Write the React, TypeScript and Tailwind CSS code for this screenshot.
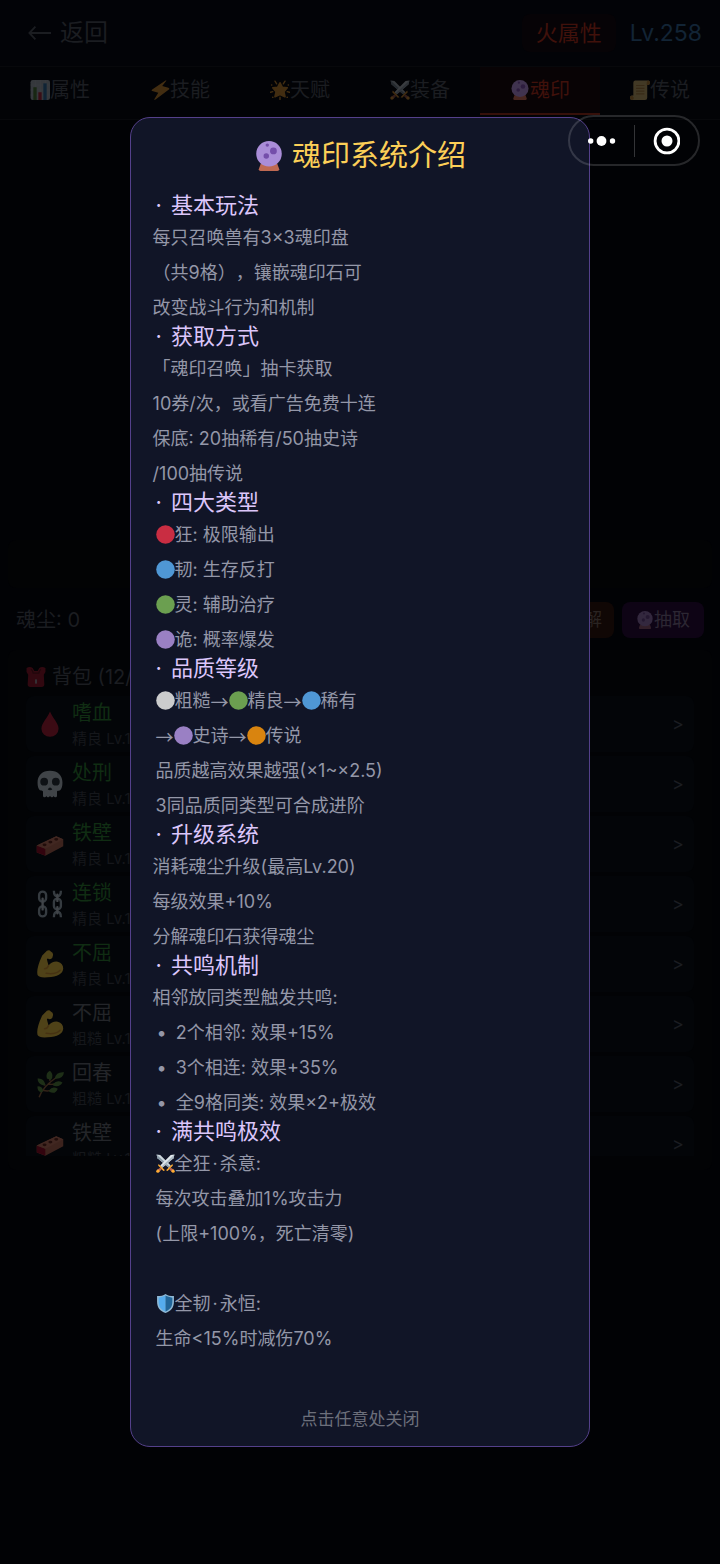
import type { ReactNode } from 'react';

type IconProps = { className?: string };

const CrystalBall = ({ className = 'size-[18px]' }: IconProps) => (
  <svg viewBox="-6 0 88 88" className={className} aria-hidden="true">
    <path d="M14 66h48l6 17q0 5-5 5H13q-5 0-5-5z" fill="#bf6952" />
    <circle cx="38" cy="37.500" r="37.500" fill="#aa8dd8" />
    <circle cx="51" cy="29" r="10" fill="#744eaa" />
    <circle cx="30" cy="44" r="8" fill="#744eaa" />
    <circle cx="33" cy="12" r="5" fill="#744eaa" />
  </svg>
);

const Swords = ({ className = 'size-[18px]' }: IconProps) => (
  <svg viewBox="0 0 36 36" className={className} aria-hidden="true">
    <path d="M1 1l7 1 20 20-4 4L3 8z" fill="#ccd6dd" />
    <path d="M1 1l25 23-2 2L3 8z" fill="#8899a6" />
    <path d="M35 1l-7 1L8 22l4 4L33 8z" fill="#e1e8ed" />
    <path d="M35 1L10 24l2 2L33 8z" fill="#aab8c2" />
    <path d="M5 19l12 12-3 1-10-10zM31 19L19 31l3 1 10-10z" fill="#ffac33" />
    <path d="M8 26l3 3-5 5-4-4zM28 26l-3 3 5 5 4-4z" fill="#bf6952" />
    <circle cx="3.500" cy="32.500" r="3" fill="#ffac33" />
    <circle cx="32.500" cy="32.500" r="3" fill="#ffac33" />
  </svg>
);

const Shield = ({ className = 'size-[18px]' }: IconProps) => (
  <svg viewBox="0 0 36 36" className={className} aria-hidden="true">
    <path d="M18 0c4 3 9 4 16 4v10c0 12-6 18-16 22C8 32 2 26 2 14V4c7 0 12-1 16-4z" fill="#8fb8d4" />
    <path d="M18 3c-4 2-8 3.500-13 4v7c0 10 4 15 13 19z" fill="#55acee" />
    <path d="M18 3c4 2 8 3.500 13 4v7c0 10-4 15-13 19z" fill="#226699" />
  </svg>
);

const Chart = ({ className = 'size-5' }: IconProps) => (
  <svg viewBox="0 0 36 36" className={className} aria-hidden="true">
    <rect x="1" y="0" width="35" height="36" rx="4" fill="#ccd6dd" />
    <path d="M1 9h35M1 18h35M1 27h35M10 0v36M19 0v36M28 0v36" stroke="#e1e8ed" />
    <rect x="6" y="13" width="6" height="23" fill="#5c913b" />
    <rect x="15" y="22" width="6" height="14" fill="#dd2e44" />
    <rect x="24" y="6" width="6" height="30" fill="#3b88c3" />
  </svg>
);

const Bolt = ({ className = 'size-5' }: IconProps) => (
  <svg viewBox="0 0 36 36" className={className} aria-hidden="true">
    <path d="M28 1L4 17q-2 2 0 3l11 3L8 34q-1 3 2 1l24-18q2-2-1-3l-11-3 7-9q1-2-1-1z" fill="#ffac33" />
  </svg>
);

const Star = ({ className = 'size-5' }: IconProps) => (
  <svg viewBox="0 0 36 36" className={className} aria-hidden="true">
    <path d="M18 5l4 8 9 1-6 7 2 9-9-4-9 4 2-9-6-7 9-1z" fill="#ffac33" stroke="#ffac33" strokeWidth="3" strokeLinejoin="round" />
    <path d="M9 2l3 5M27 2l-3 5M1 22l4-1M35 22l-4-1M18 31v4" stroke="#ffac33" strokeWidth="2.500" strokeLinecap="round" />
    <circle cx="3" cy="9" r="1.500" fill="#ffac33" />
    <circle cx="33" cy="9" r="1.500" fill="#ffac33" />
    <circle cx="5" cy="31" r="1.500" fill="#ffac33" />
    <circle cx="31" cy="31" r="1.500" fill="#ffac33" />
  </svg>
);

const Scroll = ({ className = 'size-5' }: IconProps) => (
  <svg viewBox="0 0 36 36" className={className} aria-hidden="true">
    <path d="M9 1h24q3 1 3 4t-3 4h-2v23q0 4-4 4H4q-4 0-4-4t4-4h2V5q0-3 3-4z" fill="#ffd983" />
    <path d="M30 9h3q3-1 3-4t-3-4q-3 1-3 4zM4 28q-4 0-4 4t4 4q3-1 3-4z" fill="#e39f3d" />
    <path d="M11 10h15M11 15h15M11 20h15M11 25h15" stroke="#d99e4a" strokeWidth="2" />
  </svg>
);

const Satchel = ({ className = 'size-5' }: IconProps) => (
  <svg viewBox="0 0 36 36" className={className} aria-hidden="true">
    <path d="M1 2q6-4 11 0l3 5h6l3-5q5-4 11 0v7l-3 5 1 17q0 5-5 5H8q-5 0-5-5l1-17-3-5z" fill="#be1931" />
    <path d="M9 4q3 2 4 7h10q1-5 4-7" fill="none" stroke="#77111f" strokeWidth="2.500" />
    <rect x="16.500" y="22" width="3" height="8" rx="1" fill="#ccd6dd" />
  </svg>
);

const Drop = ({ className = 'size-7' }: IconProps) => (
  <svg viewBox="0 0 36 36" className={className} aria-hidden="true">
    <path d="M18 2c3 8 11 15 11 22a11 10.500 0 0 1-22 0C7 17 15 10 18 2z" fill="#be1931" />
  </svg>
);

const Skull = ({ className = 'size-7' }: IconProps) => (
  <svg viewBox="0 0 36 36" className={className} aria-hidden="true">
    <path
      d="M18 1c10 0 16 6 16 15 0 5-1 8-3 10-1 1-4 0-4 2v5q0 2-2 2t-2-2q-1 2-2.500 2T18 33q-1 2-2.500 2T13 33q0 2-2 2t-2-2v-5c0-2-3-1-4-2-2-2-3-5-3-10C2 7 8 1 18 1z"
      fill="#ccd6dd"
    />
    <circle cx="10.500" cy="15" r="5" fill="#292f33" />
    <circle cx="25.500" cy="15" r="5" fill="#292f33" />
    <path d="M15 25q3-5 6 0-3 2-6 0z" fill="#292f33" />
  </svg>
);

const Brick = ({ className = 'size-7' }: IconProps) => (
  <svg viewBox="0 0 36 36" className={className} aria-hidden="true">
    <path d="M1 20L26 8l9 4v9L12 33 1 29z" fill="#c1694f" />
    <path d="M1 20l11 4v9L1 29z" fill="#a0041e" />
    <path d="M1 20L26 8l9 4-23 12z" fill="#d0765c" />
    <ellipse cx="11" cy="19" rx="2.600" ry="1.800" fill="#662113" />
    <ellipse cx="18.500" cy="15.500" rx="2.600" ry="1.800" fill="#662113" />
    <ellipse cx="26" cy="12" rx="2.600" ry="1.800" fill="#662113" />
  </svg>
);

const Chains = ({ className = 'size-7' }: IconProps) => (
  <svg viewBox="0 0 36 36" className={className} aria-hidden="true">
    <g fill="none" stroke="#aab8c2" strokeWidth="3">
      <rect x="4" y="2" width="9" height="13" rx="4.500" />
      <rect x="4" y="21" width="9" height="13" rx="4.500" />
      <rect x="23" y="11" width="9" height="14" rx="4.500" />
      <path d="M23 1q0 7 4.500 7T32 1M23 35q0-7 4.500-7T32 35" />
    </g>
    <path d="M8.500 11v14M27.500 6v8M27.500 22v8" stroke="#ccd6dd" strokeWidth="3" strokeLinecap="round" />
  </svg>
);

const Arm = ({ className = 'size-7' }: IconProps) => (
  <svg viewBox="0 0 36 36" className={className} aria-hidden="true">
    <path d="M14 1q3-2 5 1 3 1 3 4l-1 4q-2 3-6 1l-1 1 2 8q5-6 12-5 7 2 7 9-1 10-20 11-11 1-13-3Q0 24 8 7z" fill="#ffcf3d" />
    <path d="M16 20q-1 4-5 4M13 30q12 2 18-4" fill="none" stroke="#e09a2e" strokeWidth="2" strokeLinecap="round" />
  </svg>
);

const Herb = ({ className = 'size-7' }: IconProps) => (
  <svg viewBox="0 0 36 36" className={className} aria-hidden="true">
    <path d="M4 35q4-13 23-26M9 26q6 2 11 0M15 18q6 1 9 0M12 20l-4-4M18 14l-1-5" fill="none" stroke="#a0683c" strokeWidth="1.800" />
    <path
      d="M24 11q2-9 12-8-1 9-12 8zM14 11q-2-7 4-10 6 6 1 12zM10 20q-8-2-8-9 8-1 10 8zM22 18q5-6 12-2-4 7-12 4zM17 26q4-6 11-2-3 8-11 4zM7 29q-6-2-5-8 7 0 7 6z"
      fill="#5c913b"
    />
  </svg>
);

const Dot = ({ className }: { className: string }) => (
  <svg viewBox="0 0 19 19" className={`size-[19px] ${className}`} aria-hidden="true">
    <circle cx="9.500" cy="9.500" r="9.300" fill="currentColor" />
  </svg>
);

const red = <Dot className="text-[#c92d42]" />;
const blue = <Dot className="text-[#4f97d5]" />;
const green = <Dot className="text-[#6b9f50]" />;
const purple = <Dot className="text-[#9a80c4]" />;
const white = <Dot className="text-[#cbcccd]" />;
const orange = <Dot className="text-[#d9840f]" />;
const arrow = <span className="font-['Noto_Sans_CJK_SC',sans-serif]">→</span>;
const middot = <span className="px-[2px]">·</span>;

const tabs: { label: string; icon: ReactNode }[] = [
  { label: '属性', icon: <Chart /> },
  { label: '技能', icon: <Bolt /> },
  { label: '天赋', icon: <Star /> },
  { label: '装备', icon: <Swords className="size-5" /> },
  { label: '魂印', icon: <CrystalBall className="size-5" /> },
  { label: '传说', icon: <Scroll /> },
];

const stones: { name: string; grade: string; icon: ReactNode }[] = [
  { name: '嗜血', grade: '精良', icon: <Drop /> },
  { name: '处刑', grade: '精良', icon: <Skull /> },
  { name: '铁壁', grade: '精良', icon: <Brick /> },
  { name: '连锁', grade: '精良', icon: <Chains /> },
  { name: '不屈', grade: '精良', icon: <Arm /> },
  { name: '不屈', grade: '粗糙', icon: <Arm /> },
  { name: '回春', grade: '粗糙', icon: <Herb /> },
  { name: '铁壁', grade: '粗糙', icon: <Brick /> },
];

const sections: { title: string; inset?: boolean; lines: ReactNode[] }[] = [
  { title: '基本玩法', lines: ['每只召唤兽有3×3魂印盘', '（共9格），镶嵌魂印石可', '改变战斗行为和机制'] },
  {
    title: '获取方式',
    lines: ['「魂印召唤」抽卡获取', '10券/次，或看广告免费十连', '保底: 20抽稀有/50抽史诗', '/100抽传说'],
  },
  {
    title: '四大类型',
    inset: true,
    lines: [
      <>{red}狂: 极限输出</>,
      <>{blue}韧: 生存反打</>,
      <>{green}灵: 辅助治疗</>,
      <>{purple}诡: 概率爆发</>,
    ],
  },
  {
    title: '品质等级',
    inset: true,
    lines: [
      <>{white}粗糙{arrow}{green}精良{arrow}{blue}稀有</>,
      <>{arrow}{purple}史诗{arrow}{orange}传说</>,
      '品质越高效果越强(×1~×2.5)',
      '3同品质同类型可合成进阶',
    ],
  },
  { title: '升级系统', lines: ['消耗魂尘升级(最高Lv.20)', '每级效果+10%', '分解魂印石获得魂尘'] },
  {
    title: '共鸣机制',
    lines: [
      '相邻放同类型触发共鸣:',
      <Bullet>2个相邻: 效果+15%</Bullet>,
      <Bullet>3个相连: 效果+35%</Bullet>,
      <Bullet>全9格同类: 效果×2+极效</Bullet>,
    ],
  },
  {
    title: '满共鸣极效',
    inset: true,
    lines: [
      <><Swords className="size-[19px]" />全狂{middot}杀意:</>,
      '每次攻击叠加1%攻击力',
      '(上限+100%，死亡清零)',
      '',
      <><Shield className="size-[19px]" />全韧{middot}永恒:</>,
      '生命<15%时减伤70%',
      '',
    ],
  },
];

function Bullet({ children }: { children: ReactNode }) {
  return (
    <span className="flex gap-[9px] pl-1">
      <span>•</span>
      <span>{children}</span>
    </span>
  );
}

function PetPage() {
  return (
    <div className="col-start-1 row-start-1 bg-[#010205] text-[#1b1d21]">
      <header className="flex h-[67px] items-center justify-between border-b border-[#07080b] bg-[#020307] pr-[18px] pl-7">
        <button className="flex items-center gap-2 text-2xl">
          <svg viewBox="0 0 26 20" className="h-5 w-6" aria-hidden="true">
            <path d="M8 3L1.500 10 8 17M2 10h23" fill="none" stroke="currentColor" strokeWidth="2" />
          </svg>
          返回
        </button>
        <div className="flex items-center gap-[14px]">
          <span className="rounded-lg bg-[#060306] px-[14px] text-[22px] leading-[38px] text-[#40110b]">火属性</span>
          <span className="text-[23px] text-[#122435]">Lv.258</span>
        </div>
      </header>

      <nav className="grid grid-cols-6 border-b border-[#07080b] bg-[#020306] pb-1">
        {tabs.map(({ label, icon }) => (
          <button
            key={label}
            className={`flex h-12 items-center justify-center border-b-2 text-xl ${
              label === '魂印' ? 'border-[#36100a] bg-[#080305] text-[#40110b]' : 'border-transparent'
            }`}
          >
            <span className={label === '魂印' ? 'opacity-35' : 'opacity-25'}>{icon}</span>
            {label}
          </button>
        ))}
      </nav>

      <div className="mx-2 mt-[420px] h-12 rounded-lg bg-[#020304]" />

      <div className="mt-[14px] flex items-center justify-between px-4">
        <span className="text-xl">魂尘: 0</span>
        <div className="flex gap-2">
          <button className="flex h-9 w-[82px] items-center justify-center rounded-lg bg-[#100705] text-lg text-[#2a2422]">
            🔨分解
          </button>
          <button className="flex h-9 w-[82px] items-center justify-center rounded-lg bg-[#0e0415] text-lg text-[#2c2733]">
            <span className="opacity-25 grayscale-50"><CrystalBall /></span>
            抽取
          </button>
        </div>
      </div>

      <section className="mx-2 mt-3 rounded-lg bg-[#020305] px-[18px] pb-[14px]">
        <h2 className="flex h-[46px] items-center gap-[6px] pt-2 text-xl">
          <span className="opacity-25"><Satchel /></span>
          背包 (12/50)
        </h2>
        <ul className="flex h-[460px] flex-col gap-1 overflow-hidden">
          {stones.map(({ name, grade, icon }, i) => (
            <li key={i} className="flex h-14 shrink-0 items-center rounded-lg bg-[#030508] px-[10px]">
              <span className="mr-2 opacity-30">{icon}</span>
              <div className="grow pt-[2px]">
                <p className={`text-xl leading-7 ${grade === '精良' ? 'text-[#102d13]' : 'text-[#232529]'}`}>{name}</p>
                <p className="text-[15px] leading-6 text-[#15171b]">{grade} Lv.1</p>
              </div>
              <span className="text-lg">&gt;</span>
            </li>
          ))}
        </ul>
      </section>
    </div>
  );
}

function IntroDialog() {
  return (
    <div className="z-10 col-start-1 row-start-1 flex items-center justify-center">
      <div
        role="dialog"
        aria-labelledby="intro-title"
        className="w-[64%] rounded-[20px] border border-[#54408a] bg-[#111527] px-[22px] pt-[22px] pb-[15px]"
      >
        <h1 id="intro-title" className="mb-[22px] flex items-center justify-center gap-2 text-[29px] leading-8 text-[#fccf57]">
          <CrystalBall className="size-[30px]" />
          魂印系统介绍
        </h1>
        {sections.map(({ title, inset, lines }) => (
          <section key={title}>
            <h2 className="mb-1 flex gap-[9px] pl-[3px] text-[22px] leading-[22px] text-[#dcc6fb]">
              <span>·</span>
              {title}
            </h2>
            {lines.map((line, i) => (
              <p key={i} className={`flex h-[35px] items-center text-lg text-[#9497a8] ${inset ? 'pl-[3px]' : ''}`}>
                {line}
              </p>
            ))}
          </section>
        ))}
        <button className="mt-4 block w-full text-center text-[17px] leading-6 text-[#6c6f7b]">点击任意处关闭</button>
      </div>
    </div>
  );
}

function Capsule() {
  return (
    <div className="absolute top-[115px] right-5 z-20 flex h-[51px] w-[132px] items-center rounded-full border-2 border-white/15">
      <button aria-label="更多" className="flex flex-1 justify-center">
        <svg viewBox="0 0 28 10" className="h-[10px] w-7">
          <circle cx="2.700" cy="5" r="2.700" fill="#fff" />
          <circle cx="13.500" cy="5" r="4.900" fill="#fff" />
          <circle cx="24.500" cy="5" r="2.700" fill="#fff" />
        </svg>
      </button>
      <span className="h-8 w-px bg-white/20" />
      <button aria-label="关闭" className="flex flex-1 justify-center">
        <svg viewBox="0 0 28 28" className="size-7">
          <circle cx="15" cy="14" r="11.900" fill="none" stroke="#fff" strokeWidth="2.800" />
          <circle cx="15" cy="14" r="5.500" fill="#fff" />
        </svg>
      </button>
    </div>
  );
}

export default function App() {
  return (
    <main className="relative grid min-h-screen bg-[#010205] font-['Inter','Noto_Sans_CJK_SC',sans-serif] font-normal [text-spacing-trim:space-all]">
      <PetPage />
      <IntroDialog />
      <Capsule />
    </main>
  );
}
